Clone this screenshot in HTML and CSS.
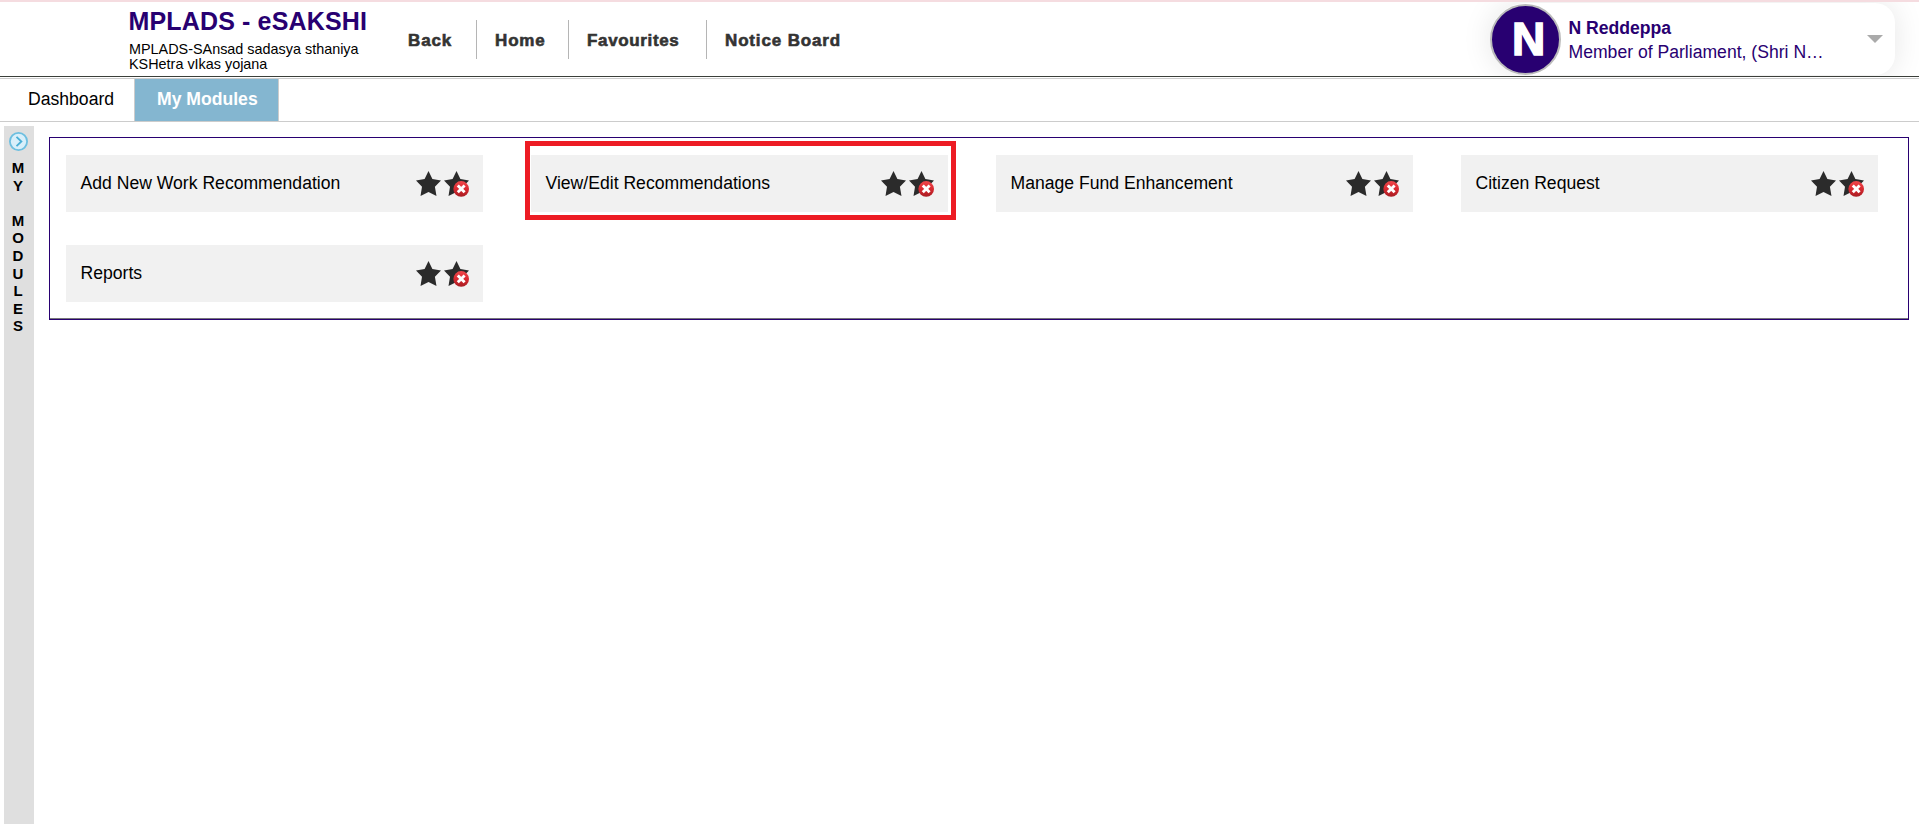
FILE: index.html
```html
<!DOCTYPE html>
<html lang="en">
<head>
<meta charset="utf-8">
<title>MPLADS - eSAKSHI</title>
<link rel="stylesheet" href="styles.css">
</head>
<body>
<svg class="defs" width="0" height="0" aria-hidden="true">
  <defs>
    <linearGradient id="red" x1="0" y1="0" x2="0" y2="1"><stop offset="0" stop-color="#f0484c"/><stop offset=".5" stop-color="#d92930"/><stop offset="1" stop-color="#a81d23"/></linearGradient>
    <symbol id="star" viewBox="0 0 25 25"><path fill="#2b2b2b" d="M12.5 0 16.4 8.1 25 9.4 18.9 15.7 20.5 25 12.5 21 4.5 25 6 15.7 0 9.4 8.6 8.1Z"/></symbol>
    <symbol id="unstar" viewBox="0 0 25 26"><path fill="#2b2b2b" d="M12.5 0 16.4 8.1 25 9.4 18.9 15.7 20.5 25 12.5 21 4.5 25 6 15.7 0 9.4 8.6 8.1Z"/><circle cx="17.2" cy="17.9" r="7.8" fill="url(#red)"/><path d="m14.8 15.5 4.8 4.8m0-4.8-4.8 4.8" stroke="#fff" stroke-width="2.9" stroke-linecap="square"/></symbol>
  </defs>
</svg>
<header class="header">
  <div class="brand">
    <h1 class="brand-title">MPLADS - eSAKSHI</h1>
    <p class="brand-sub">MPLADS-SAnsad sadasya sthaniya<br>KSHetra vIkas yojana</p>
  </div>
  <nav class="nav">
    <a class="nav-item back">Back</a>
    <a class="nav-item home">Home</a>
    <a class="nav-item favourites">Favourites</a>
    <a class="nav-item notice">Notice Board</a>
  </nav>
  <div class="profile">
    <div class="avatar">N</div>
    <div class="profile-text"><strong>N Reddeppa</strong><span>Member of Parliament, (Shri N…</span></div>
    <span class="caret"></span>
  </div>
</header>
<div class="tabs">
  <a class="tab">Dashboard</a>
  <a class="tab active">My Modules</a>
</div>
<div class="content">
  <aside class="sidebar">
    <svg width="19" height="19" viewBox="0 0 19 19" fill="none"><circle cx="9.5" cy="9.5" r="8.6" fill="#d9effa" stroke="#6dbfe0" stroke-width="1.8"/><path d="m7.5 4.8 4.9 4.7-4.9 4.7" stroke="#4aafd6" stroke-width="1.8"/></svg>
    <div class="sidebar-label"><span>M</span><span>Y</span><span></span><span>M</span><span>O</span><span>D</span><span>U</span><span>L</span><span>E</span><span>S</span></div>
  </aside>
  <main class="panel">
    <div class="card"><span>Add New Work Recommendation</span><div class="icons"><svg class="star"><use href="#star"/></svg><svg class="unstar"><use href="#unstar"/></svg></div></div>
    <div class="card highlighted"><span>View/Edit Recommendations</span><div class="icons"><svg class="star"><use href="#star"/></svg><svg class="unstar"><use href="#unstar"/></svg></div></div>
    <div class="card"><span>Manage Fund Enhancement</span><div class="icons"><svg class="star"><use href="#star"/></svg><svg class="unstar"><use href="#unstar"/></svg></div></div>
    <div class="card"><span>Citizen Request</span><div class="icons"><svg class="star"><use href="#star"/></svg><svg class="unstar"><use href="#unstar"/></svg></div></div>
    <div class="card"><span>Reports</span><div class="icons"><svg class="star"><use href="#star"/></svg><svg class="unstar"><use href="#unstar"/></svg></div></div>
  </main>
</div>
</body>
</html>
```
FILE: styles.css
```css
* { box-sizing: border-box; }
html, body { height: 100%; }
body {
  margin: 0;
  display: flex;
  flex-direction: column;
  overflow: hidden;
  background: #fff;
  color: #000;
  font: 17.6px/20px "Liberation Sans", Arial, sans-serif;
}
.defs { position: absolute; }

.header {
  flex: none;
  display: flex;
  height: 77px;
  border-top: 2px solid #f5dce0;
  border-bottom: 1px solid #3b3f3a;
  overflow: hidden;
}
.brand { width: 279px; margin-left: 128px; padding-top: 5px; white-space: nowrap; }
.brand-title {
  margin: 0 0 0 .5px;
  font-size: 25px;
  line-height: 28px;
  letter-spacing: .15px;
  color: #280071;
}
.brand-sub { margin: 7px 0 0 1px; font-size: 14.4px; line-height: 15px; }

.nav { display: flex; padding-top: 18px; }
.nav-item {
  height: 39px;
  padding-left: 18px;
  border-right: 1px solid #b5b5b5;
  font-size: 17px;
  font-weight: bold;
  line-height: 41px;
  letter-spacing: .85px;
  color: #333;
  white-space: nowrap;
  -webkit-text-stroke: .6px #333;
}
.back { width: 70px; padding-left: 1px; }
.home { width: 92px; }
.favourites { width: 138px; letter-spacing: .65px; }
.notice { border: 0; }

.profile {
  display: flex;
  align-items: center;
  width: 405px;
  height: 72px;
  margin: 1px 24px 0 auto;
  border-radius: 36px 20px 20px 36px;
  box-shadow: 0 0 30px rgba(0, 0, 0, .1);
}
.avatar {
  width: 71px;
  height: 71px;
  border: 2px solid #bbb;
  border-radius: 50%;
  background: #280071;
  color: #fff;
  font-size: 46px;
  font-weight: bold;
  line-height: 66px;
  padding-left: 20px;
  -webkit-text-stroke: 1.6px #fff;
}
.profile-text {
  display: flex;
  flex-direction: column;
  width: 290px;
  padding: 1px 0 0 7.5px;
  line-height: 24px;
  color: #280071;
}
.caret { margin-left: 16px; border: 8px solid transparent; border-top-color: #aaa; border-bottom: 0; }

.tabs {
  flex: none;
  display: flex;
  height: 44px;
  margin-top: 1px;
  border-top: 1px solid #ccc;
  border-bottom: 1px solid #ccc;
}
.tab { width: 135px; padding-left: 28px; line-height: 40px; border-right: 1px solid #ccc; }
.tab.active { width: 144px; padding-left: 22px; background: #84b6d0; color: #fff; font-weight: bold; }

.content { flex: 1; display: flex; padding: 4px 9px 0 4px; }
.sidebar {
  display: flex;
  flex-direction: column;
  align-items: center;
  width: 30px;
  padding: 6px 2px 0 0;
  background: #dfdfdf;
}
.sidebar-label {
  display: flex;
  flex-direction: column;
  align-items: center;
  padding-top: 8px;
  font-size: 15px;
  font-weight: bold;
  line-height: 17.6px;
}
.sidebar-label span { height: 17.6px; }

.panel {
  display: grid;
  grid-template-columns: repeat(4, 417px);
  grid-auto-rows: 57px;
  gap: 33px 48px;
  width: 1860px;
  height: 183px;
  margin: 11px 0 0 15px;
  padding: 17px 16px 0;
  border: 1px solid #280071;
  box-shadow: inset 0 -1px #77777a;
}
.card {
  display: flex;
  justify-content: space-between;
  padding: 16px 14px 0 14.5px;
  line-height: 24px;
  background: #f1f1f1;
  white-space: nowrap;
}
.highlighted { position: relative; }
.highlighted::after {
  content: "";
  position: absolute;
  inset: -14px -8px -8px -6px;
  border: 5px solid #ed1c24;
}
.icons { display: flex; gap: 3px; }
.star { width: 25px; height: 25px; }
.unstar { width: 25px; height: 26px; }
```
